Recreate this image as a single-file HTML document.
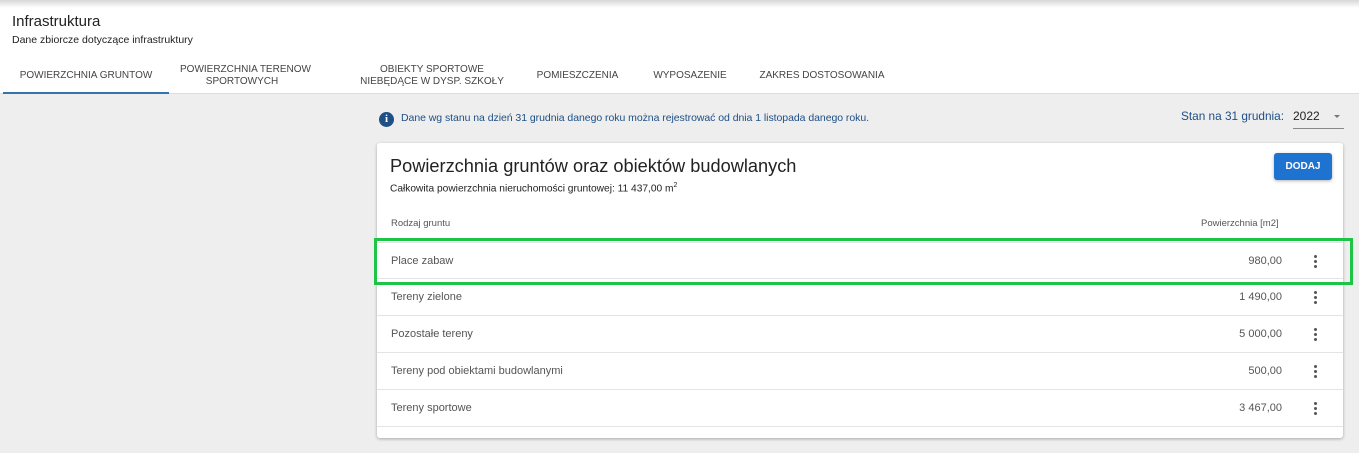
<!DOCTYPE html>
<html><head><meta charset="utf-8"><style>
*{margin:0;padding:0;box-sizing:border-box}
body{width:1359px;height:453px;overflow:hidden;background:#eeeeee;font-family:"Liberation Sans",sans-serif;position:relative;color:#222}
.abs{position:absolute;white-space:nowrap}
.top{position:absolute;left:0;top:0;width:1359px;height:94px;background:#fff;border-bottom:1px solid #ddd}
.shadow{position:absolute;left:0;top:0;width:1359px;height:8px;background:linear-gradient(#d8d8d8,#fff)}
.tab{position:absolute;font-size:10px;color:#444;text-align:center;line-height:12px;white-space:nowrap}
.card{position:absolute;left:377px;top:143px;width:966px;height:295px;background:#fff;border-radius:3px;box-shadow:0 1px 3px rgba(0,0,0,.3)}
.row{position:absolute;left:0;width:966px;height:37px;border-bottom:1px solid #e4e4e4;font-size:11px;color:#555}
.row .n{position:absolute;left:14px;top:12px}
.row .v{position:absolute;right:61px;top:12px}
.dots{position:absolute;left:937px;top:12px;width:3px}
.dots i{display:block;width:3px;height:3px;border-radius:50%;background:#555;margin-bottom:2px}
</style></head><body>
<div class="top"><div class="shadow"></div>
<div class="abs" style="left:12px;top:13px;font-size:15px;color:#222">Infrastruktura</div>
<div class="abs" style="left:12px;top:34px;font-size:10.5px;color:#222">Dane zbiorcze dotyczące infrastruktury</div>
<div class="tab" style="left:3px;top:70px;width:166px">POWIERZCHNIA GRUNTOW</div>
<div class="tab" style="left:180px;top:64px;width:124px">POWIERZCHNIA TERENOW<br>SPORTOWYCH</div>
<div class="tab" style="left:350px;top:64px;width:164px">OBIEKTY SPORTOWE<br>NIEBĘDĄCE W DYSP. SZKOŁY</div>
<div class="tab" style="left:530px;top:70px;width:95px">POMIESZCZENIA</div>
<div class="tab" style="left:648px;top:70px;width:84px">WYPOSAZENIE</div>
<div class="tab" style="left:755px;top:70px;width:134px">ZAKRES DOSTOSOWANIA</div>
<div class="abs" style="left:3px;top:92px;width:166px;height:2px;background:#3474a8"></div>
</div>
<div class="abs" style="left:379px;top:112px;width:15px;height:15px;border-radius:50%;background:#1e4f86;color:#fff;font-size:11px;font-weight:bold;text-align:center;line-height:15px;font-family:'Liberation Serif',serif">i</div>
<div class="abs" style="left:401px;top:112px;font-size:10.5px;color:#1e4f86;letter-spacing:-0.05px">Dane wg stanu na dzień 31 grudnia danego roku można rejestrować od dnia 1 listopada danego roku.</div>
<div class="abs" style="left:1181px;top:109px;font-size:11.8px;color:#1e4f86">Stan na 31 grudnia:</div>
<div class="abs" style="left:1293px;top:109px;font-size:12px;color:#222">2022</div>
<div class="abs" style="left:1334px;top:115px;width:0;height:0;border-left:3px solid transparent;border-right:3px solid transparent;border-top:3px solid #777"></div>
<div class="abs" style="left:1293px;top:128px;width:51px;height:1px;background:#888"></div>
<div class="card">
<div class="abs" style="left:13px;top:13px;font-size:18.2px;color:#222">Powierzchnia gruntów oraz obiektów budowlanych</div>
<div class="abs" style="left:13px;top:39px;font-size:10.2px;color:#222">Całkowita powierzchnia nieruchomości gruntowej: 11 437,00 m<sup style="font-size:7px">2</sup></div>
<div class="abs" style="left:897px;top:10px;width:58px;height:27px;background:#1f73d0;border-radius:3px;box-shadow:0 1px 3px rgba(0,0,0,.3);color:#fff;font-size:10px;font-weight:bold;text-align:center;line-height:27px">DODAJ</div>
<div class="abs" style="left:14px;top:75px;font-size:9.5px;color:#555">Rodzaj gruntu</div>
<div class="abs" style="left:824px;top:75px;font-size:9.5px;color:#555">Powierzchnia [m2]</div>
<div class="row" style="top:99px;border-top:1px solid #e4e4e4"><span class="n">Place zabaw</span><span class="v">980,00</span><div class="dots"><i></i><i></i><i></i></div></div>
<div class="row" style="top:136px"><span class="n">Tereny zielone</span><span class="v">1 490,00</span><div class="dots"><i></i><i></i><i></i></div></div>
<div class="row" style="top:173px"><span class="n">Pozostałe tereny</span><span class="v">5 000,00</span><div class="dots"><i></i><i></i><i></i></div></div>
<div class="row" style="top:210px"><span class="n">Tereny pod obiektami budowlanymi</span><span class="v">500,00</span><div class="dots"><i></i><i></i><i></i></div></div>
<div class="row" style="top:247px"><span class="n">Tereny sportowe</span><span class="v">3 467,00</span><div class="dots"><i></i><i></i><i></i></div></div>
</div>
<div class="abs" style="left:374px;top:238px;width:979px;height:47px;border:3px solid #1ec445"></div>
</body></html>
